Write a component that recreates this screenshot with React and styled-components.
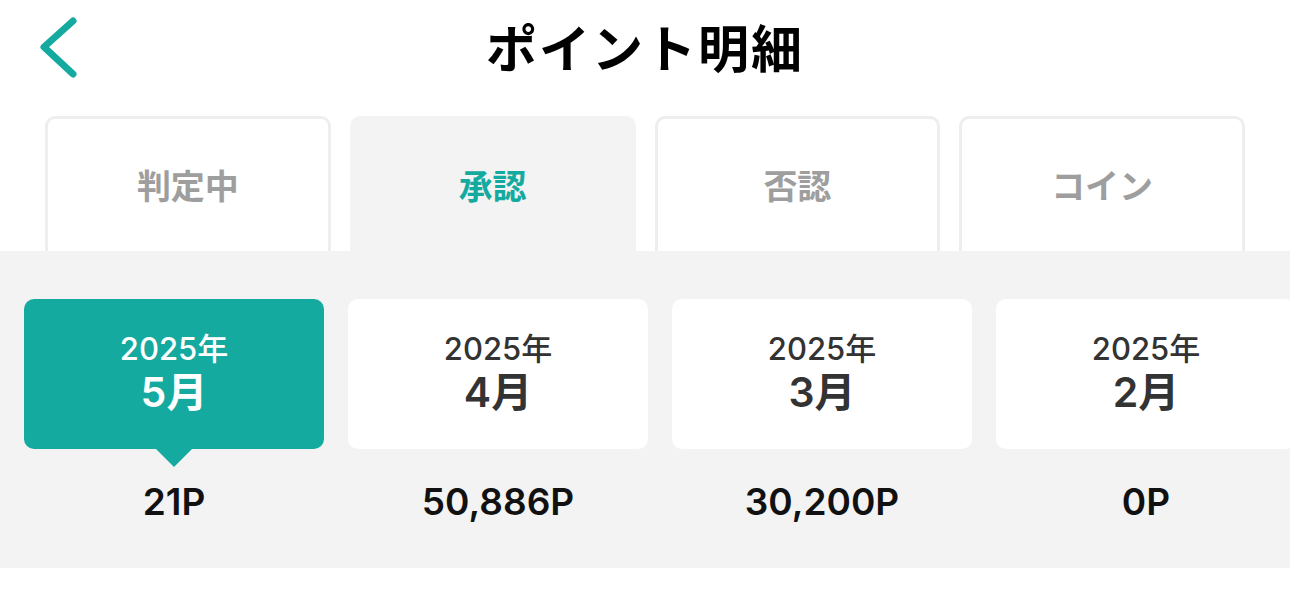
import React from "react";
import styled, { createGlobalStyle } from "styled-components";

const GlobalStyle = createGlobalStyle`
  html, body {
    margin: 0;
    padding: 0;
    background: #ffffff;
    font-family: "Noto Sans CJK JP", "Noto Sans", sans-serif;
  }
`;

const teal = "#15aaa0";
const numeric = `"Inter", "Noto Sans CJK JP", sans-serif`;

const Page = styled.div`
  width: 1290px;
  overflow: hidden;
  background: #fff;
`;

const Header = styled.header`
  height: 96px;
  display: grid;
  grid-template-columns: 1fr auto 1fr;
  align-items: center;
`;

const BackButton = styled.button`
  justify-self: start;
  margin-left: 32px;
  margin-top: -2px;
  padding: 0;
  border: none;
  background: none;
  width: 50px;
  height: 70px;
  display: flex;
  cursor: pointer;
`;

const Title = styled.h1`
  margin: 0 0 4px;
  font-size: 51px;
  font-weight: 700;
  letter-spacing: 2px;
  color: #000;
  line-height: 1;
`;

const Tabs = styled.nav`
  padding: 20px 45px 0;
  display: grid;
  grid-template-columns: repeat(4, 1fr);
  gap: 19px;
`;

const Tab = styled.div`
  height: 135px;
  box-sizing: border-box;
  border-radius: 10px 10px 0 0;
  border: 3px solid ${(p) => (p.$active ? "#f3f3f3" : "#eeeeee")};
  border-bottom: none;
  background: ${(p) => (p.$active ? "#f3f3f3" : "#fff")};
  display: flex;
  align-items: center;
  justify-content: center;
  padding-bottom: 2px;
  font-size: 34px;
  font-weight: 700;
  color: ${(p) => (p.$active ? teal : "#9e9e9e")};
`;

const Months = styled.section`
  background: #f3f3f3;
  padding: 48px 0 41px 24px;
  display: flex;
  gap: 24px;
  overflow: hidden;
`;

const MonthColumn = styled.div`
  flex: 0 0 300px;
  display: flex;
  flex-direction: column;
  align-items: center;
`;

const MonthCard = styled.div`
  position: relative;
  width: 100%;
  height: 150px;
  border-radius: 10px;
  background: ${(p) => (p.$active ? teal : "#fff")};
  color: ${(p) => (p.$active ? "#fff" : "#333")};
  display: flex;
  flex-direction: column;
  align-items: center;
  justify-content: center;
  padding-bottom: 4px;
  box-sizing: border-box;

  ${(p) =>
    p.$active &&
    `
    &::after {
      content: "";
      position: absolute;
      left: 50%;
      top: 100%;
      margin-left: -18px;
      border-left: 18px solid transparent;
      border-right: 18px solid transparent;
      border-top: 18px solid ${teal};
    }
  `}
`;

const Year = styled.div`
  font-family: ${numeric};
  font-size: 31px;
  font-weight: 500;
  line-height: 40px;
`;

const Month = styled.div`
  font-family: ${numeric};
  font-size: 41px;
  font-weight: 600;
  line-height: 46px;
`;

const Points = styled.div`
  margin-top: 28px;
  font-family: ${numeric};
  font-size: 37px;
  font-weight: 600;
  line-height: 50px;
  color: #111;
`;

const tabs = ["判定中", "承認", "否認", "コイン"];

const months = [
  { year: "2025年", month: "5月", points: "21P" },
  { year: "2025年", month: "4月", points: "50,886P" },
  { year: "2025年", month: "3月", points: "30,200P" },
  { year: "2025年", month: "2月", points: "0P" },
];

export default function App() {
  return (
    <Page>
      <GlobalStyle />
      <Header>
        <BackButton aria-label="戻る">
          <svg width="50" height="70" viewBox="0 0 50 70">
            <path
              d="M41 9 L12 35 L41 62"
              fill="none"
              stroke={teal}
              strokeWidth="7"
              strokeLinecap="round"
              strokeLinejoin="round"
            />
          </svg>
        </BackButton>
        <Title>ポイント明細</Title>
        <div />
      </Header>
      <Tabs>
        {tabs.map((t, i) => (
          <Tab key={t} $active={i === 1}>
            {t}
          </Tab>
        ))}
      </Tabs>
      <Months>
        {months.map((m, i) => (
          <MonthColumn key={m.month}>
            <MonthCard $active={i === 0}>
              <Year>{m.year}</Year>
              <Month>{m.month}</Month>
            </MonthCard>
            <Points>{m.points}</Points>
          </MonthColumn>
        ))}
      </Months>
    </Page>
  );
}
